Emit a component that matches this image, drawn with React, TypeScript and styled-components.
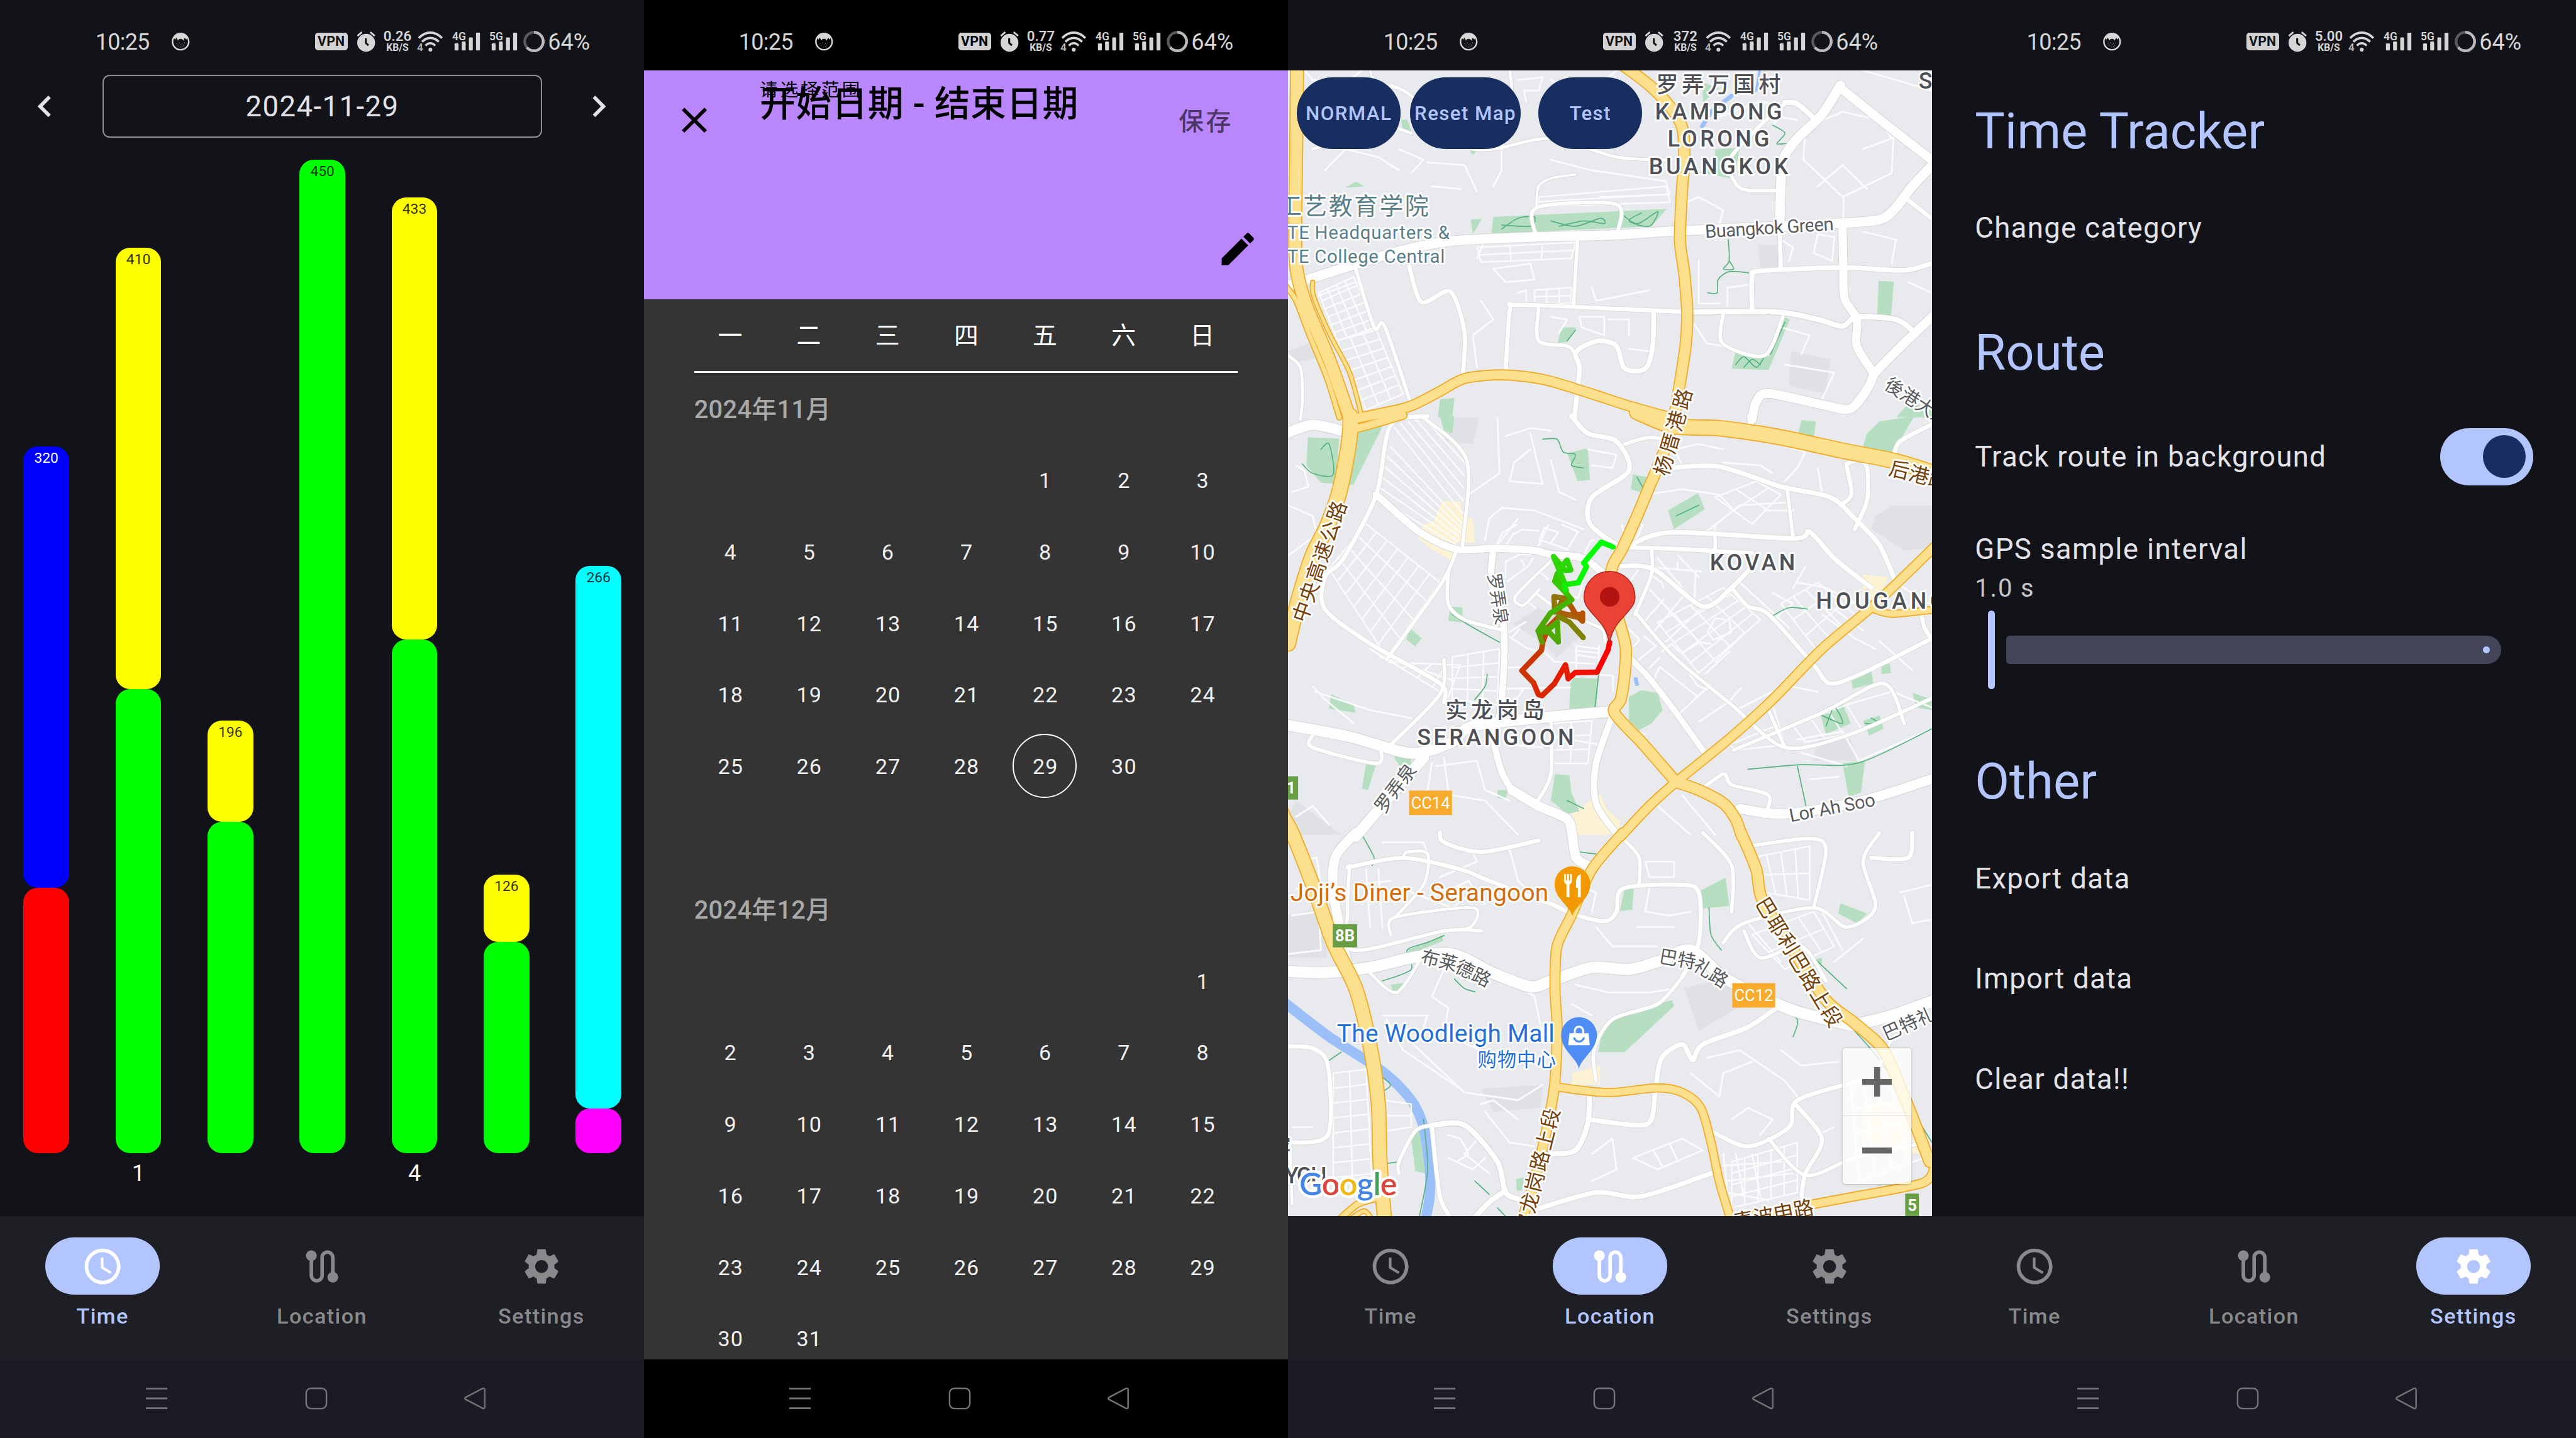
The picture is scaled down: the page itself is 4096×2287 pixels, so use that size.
import React from "react";
import styled, { createGlobalStyle, css } from "styled-components";
import {
  MdSchedule,
  MdRoute,
  MdSettings,
  MdClose,
  MdEdit,
  MdKeyboardArrowLeft,
  MdKeyboardArrowRight,
} from "react-icons/md";

/* 1rem is ten units of the 4320-unit wide board of four phones. */
const GlobalStyle = createGlobalStyle`
  html { font-size: calc(100vw / 432); }
  *, *::before, *::after { box-sizing: border-box; }
  body {
    margin: 0;
    background: #121318;
    font-family: Roboto, "Noto Sans CJK SC", sans-serif;
    overflow: hidden;
  }
  svg { display: block; flex: none; }
`;

const palette = {
  background: "#121318",
  nav: "#1d1f24",
  system: "#1b1b23",
  primary: "#b3c5ff",
  onPrimary: "#182e60",
  text: "#e3e2e8",
  muted: "#89898b",
};

const Board = styled.main`
  display: grid;
  grid-template-columns: repeat(4, 108rem);
  height: 100vh;
  overflow: hidden;
`;

const Phone = styled.section<{ $bg?: string }>`
  display: flex;
  flex-direction: column;
  height: 241.22rem;
  min-width: 0;
  overflow: hidden;
  color: ${palette.text};
  background: ${(p) => p.$bg ?? palette.background};
`;

/* ---------- status bar ---------- */

const StatusRow = styled.header<{ $nudge?: boolean }>`
  display: flex;
  align-items: center;
  flex: none;
  height: 11.8rem;
  padding: 2.2rem 0 0 ${(p) => (p.$nudge ? "15.9rem" : "16rem")};
  color: #d6d6d6;
  white-space: nowrap;
  svg {
    overflow: visible;
  }
`;

const Clock = styled.span`
  width: 12.8rem;
  padding-top: 0.2rem;
  font-size: 3.8rem;
  line-height: 1.2;
  letter-spacing: -0.08rem;
`;

const Slot = styled.span<{ $w: number; $gap?: number }>`
  flex: none;
  width: ${(p) => p.$w}rem;
  margin-left: ${(p) => p.$gap ?? 0}rem;
  svg {
    width: 100%;
    height: auto;
  }
`;

const VpnBadge = styled.span<{ $ink: string }>`
  display: flex;
  align-items: center;
  justify-content: center;
  width: 5.5rem;
  height: 3rem;
  margin: 0 0 0.1rem 21rem;
  border-radius: 0.5rem;
  background: #d2d2d2;
  color: ${(p) => p.$ink};
  font-size: 2.25rem;
  font-weight: 700;
  letter-spacing: 0.02rem;
`;

const Speed = styled.span`
  display: flex;
  flex-direction: column;
  align-items: center;
  width: 4.9rem;
  margin-left: 1.2rem;
  font-weight: 600;
  font-size: 2.35rem;
  line-height: 2.1rem;
  small {
    font-size: 1.65rem;
    line-height: 1.7rem;
    font-weight: 700;
  }
`;

const Battery = styled.span`
  margin-left: 0.5rem;
  padding-top: 0.2rem;
  font-size: 3.8rem;
  line-height: 1.2;
  letter-spacing: 0;
`;

const CatFace = ({ ink }: { ink: string }) => (
  <svg viewBox="0 0 30 30">
    <circle cx="15" cy="15" r="13.6" fill={ink} stroke="#d6d6d6" strokeWidth="2.6" />
    <path d="M3.6 8A13 13 0 0 1 26.4 8L24.5 11.5 22 8.5Q20 12 19.5 13.5L18 11Q15 9.8 12 11L10.5 13.5Q9.6 11 8 8.5L5.5 11.5Z" fill="#d6d6d6" />
    <path d="M8 18h1M12 17h1M17 18h1M21 17h1M10 21h1M15 20h1M19 21h1M14 24h1M17 23.5h1" stroke="#d6d6d6" strokeWidth="1" />
  </svg>
);

const Alarm = ({ ink }: { ink: string }) => (
  <svg viewBox="0 0 32 36">
    <circle cx="16" cy="20" r="15" fill="#d6d6d6" />
    <path d="M1.500 8.500L9 2.200M30.500 8.500L23 2.200" stroke="#d6d6d6" strokeWidth="3" fill="none" />
    <path d="M15.500 12.500V20.500L20 24.500" stroke={ink} strokeWidth="3.200" fill="none" strokeLinejoin="round" />
  </svg>
);

const Wifi = () => (
  <svg viewBox="0 0 43 34">
    <g fill="none" stroke="#d6d6d6" strokeWidth="3.8">
      <path d="M3 11Q12 2 22.500 2T42 11" />
      <path d="M8.500 17.500Q14.500 11 22.500 11T36.500 17.500" />
      <path d="M14.500 24Q17.500 19.800 22.500 19.800T30.500 24" />
    </g>
    <circle cx="22.5" cy="30.5" r="3.2" fill="#d6d6d6" />
    <text x="0" y="33" fontSize="18" fontWeight="600" fill="#b5b5b5">4</text>
  </svg>
);

const Signal = ({ label }: { label: string }) => (
  <svg viewBox="0 0 48 34">
    <g fill="#d6d6d6">
      <rect x="4" y="20" width="6.6" height="12" rx="1.5" />
      <rect x="16" y="17" width="6.6" height="15" rx="1.5" />
      <rect x="28" y="10" width="6.6" height="22" rx="1.5" />
      <rect x="40" y="2" width="6.6" height="30" rx="1.5" />
      <text x="0" y="15.2" fontSize="20" fontWeight="600" textLength="23" lengthAdjust="spacingAndGlyphs">{label}</text>
    </g>
  </svg>
);

const BatteryRing = () => (
  <svg viewBox="0 0 36 36">
    <circle cx="18" cy="18" r="15.5" fill="none" stroke="#5a5a5c" strokeWidth="4.6" />
    <circle cx="18" cy="18" r="15.5" fill="none" stroke="#b9b9b9" strokeWidth="4.6" pathLength="100" strokeDasharray="64 36" transform="rotate(-90 18 18)" />
  </svg>
);

function StatusBar({ speed, ink = palette.background, nudge }: { speed: string; ink?: string; nudge?: boolean }) {
  return (
    <StatusRow $nudge={nudge}>
      <Clock>10:25</Clock>
      <Slot $w={3}><CatFace ink={ink} /></Slot>
      <VpnBadge $ink={ink}>VPN</VpnBadge>
      <Slot $w={3.2} $gap={1.5}><Alarm ink={ink} /></Slot>
      <Speed>{speed}<small>KB/S</small></Speed>
      <Slot $w={4.3} $gap={0.8}><Wifi /></Slot>
      <Slot $w={4.8} $gap={1.6}><Signal label="4G" /></Slot>
      <Slot $w={4.8} $gap={1.5}><Signal label="5G" /></Slot>
      <Slot $w={3.6} $gap={0.9}><BatteryRing /></Slot>
      <Battery>64%</Battery>
    </StatusRow>
  );
}

/* ---------- bottom navigation and system keys ---------- */

const NavRow = styled.nav`
  display: flex;
  gap: 2.4rem;
  flex: none;
  height: 24rem;
  padding-top: 3.6rem;
  background: ${palette.nav};
`;

const NavItem = styled.div<{ $active: boolean }>`
  flex: 1;
  display: flex;
  flex-direction: column;
  align-items: center;
  gap: 1.2rem;
  font-size: 3.6rem;
  line-height: 4.8rem;
  font-weight: 500;
  letter-spacing: 0.15rem;
  color: ${(p) => (p.$active ? palette.primary : palette.muted)};
`;

const Pill = styled.span<{ $active: boolean }>`
  display: flex;
  align-items: center;
  justify-content: center;
  width: 19.2rem;
  height: 9.6rem;
  border-radius: 4.8rem;
  svg {
    width: 7.2rem;
    height: 7.2rem;
  }
  ${(p) => p.$active && css`
    background: ${palette.primary};
    color: #fff;
  `}
`;

const tabs = [
  { name: "Time", Icon: MdSchedule },
  { name: "Location", Icon: MdRoute },
  { name: "Settings", Icon: MdSettings },
];

const BottomNav = ({ active }: { active: string }) => (
  <NavRow>
    {tabs.map(({ name, Icon }) => (
      <NavItem key={name} $active={name === active}>
        <Pill $active={name === active}><Icon /></Pill>
        {name}
      </NavItem>
    ))}
  </NavRow>
);

const KeysRow = styled.footer<{ $bg: string; $nudge?: boolean }>`
  display: flex;
  align-items: center;
  flex: none;
  gap: 23rem;
  height: 13.22rem;
  padding-left: ${(p) => (p.$nudge ? "24.3rem" : "24.4rem")};
  background: ${(p) => p.$bg};
  svg {
    width: 3.8rem;
    height: 3.8rem;
    fill: none;
    stroke: #737379;
  }
  svg:last-child {
    margin-left: -0.2rem;
  }
`;

const SystemKeys = ({ bg = palette.system, nudge }: { bg?: string; nudge?: boolean }) => (
  <KeysRow $bg={bg} $nudge={nudge}>
    <svg viewBox="0 0 38 38" strokeWidth="3"><path d="M1 2.500h36M1 19h36M1 35.500h36" /></svg>
    <svg viewBox="0 0 38 38" strokeWidth="2.6"><rect x="2" y="2" width="34" height="34" rx="8" /></svg>
    <svg viewBox="0 0 38 38" strokeWidth="2.6"><path d="M2.500 17.300L31 2.200Q34.500 1.200 34.500 4.500V33.500Q34.500 36.800 31 35.600L2.500 20.700Q0 19 2.500 17.300Z" /></svg>
  </KeysRow>
);

/* ---------- time screen ---------- */

const Body = styled.div`
  flex: 1;
  min-height: 0;
  display: flex;
  flex-direction: column;
`;

const DateRow = styled.div`
  display: flex;
  align-items: center;
  justify-content: space-between;
  flex: none;
  height: 10.5rem;
  margin: 0.8rem 4rem 0 3.9rem;
  svg {
    width: 7.2rem;
    height: 7.2rem;
  }
`;

const DateField = styled.div`
  display: flex;
  align-items: center;
  justify-content: center;
  width: 73.8rem;
  height: 100%;
  margin-left: 0.2rem;
  border: 0.3rem solid #8d8e93;
  border-radius: 1.2rem;
  font-size: 4.8rem;
  letter-spacing: 0.15rem;
`;

const Chart = styled.div`
  display: flex;
  justify-content: space-between;
  flex: none;
  margin: 3.65rem 3.8rem 0 3.95rem;
`;

const Column = styled.div`
  display: flex;
  flex-direction: column;
  justify-content: flex-end;
  align-items: center;
  width: 7.65rem;
  height: 173.7rem;
`;

const Segment = styled.div<{ $color: string; $ink?: string }>`
  flex: none;
  width: 100%;
  border-radius: 2.4rem;
  background: ${(p) => p.$color};
  color: ${(p) => p.$ink ?? "rgba(0, 0, 0, 0.82)"};
  font-size: 2.4rem;
  line-height: 4.1rem;
  text-align: center;
`;

const Tick = styled.div`
  flex: none;
  height: 7.05rem;
  padding-top: 1.4rem;
  font-size: 3.8rem;
  line-height: 4.2rem;
  color: #fff;
`;

const days: { tick?: string; ink?: string; parts: [string, number][] }[] = [
  { ink: "#fff", parts: [["#0000ff", 200], ["#ff0000", 120]] },
  { tick: "1", parts: [["#ffff00", 200], ["#00ff00", 210]] },
  { parts: [["#ffff00", 46], ["#00ff00", 150]] },
  { parts: [["#00ff00", 450]] },
  { tick: "4", parts: [["#ffff00", 200.4], ["#00ff00", 232.6]] },
  { parts: [["#ffff00", 30.5], ["#00ff00", 95.5]] },
  { parts: [["#00ffff", 246], ["#ff00ff", 20]] },
];

const TimeScreen = () => (
  <Phone>
    <StatusBar speed="0.26" />
    <Body>
      <DateRow>
        <MdKeyboardArrowLeft />
        <DateField>2024-11-29</DateField>
        <MdKeyboardArrowRight />
      </DateRow>
      <Chart>
        {days.map((day, i) => (
          <Column key={i}>
            {day.parts.map(([color, value], j) => (
              <Segment key={j} $color={color} $ink={day.ink} style={{ height: `${value * 0.37024}rem` }}>
                {j === 0 && Math.round(day.parts.reduce((sum, p) => sum + p[1], 0))}
              </Segment>
            ))}
            <Tick>{day.tick}</Tick>
          </Column>
        ))}
      </Chart>
    </Body>
    <BottomNav active="Time" />
    <SystemKeys />
  </Phone>
);

/* ---------- date range picker ---------- */

const PickerHeader = styled.div`
  display: flex;
  flex-direction: column;
  justify-content: space-between;
  flex: none;
  height: 38.4rem;
  padding: 0 4.8rem 4.8rem;
  background: #b986fb;
  color: #000;
  > svg {
    align-self: flex-end;
    width: 7.2rem;
    height: 7.2rem;
  }
`;

const PickerTop = styled.div`
  display: flex;
  align-items: flex-start;
  > svg {
    width: 7.2rem;
    height: 7.2rem;
    margin-top: 4.8rem;
  }
`;

const PickerTitles = styled.div`
  padding: 1.95rem 0 0 7.4rem;
  white-space: nowrap;
`;

const Overline = styled.div`
  font-size: 3rem;
  line-height: 3rem;
  letter-spacing: 0.45rem;
`;

const Headline = styled.div`
  margin-top: -2.2rem;
  font-size: 6rem;
  line-height: 6rem;
  font-weight: 500;
  letter-spacing: 0.04rem;
`;

const SaveButton = styled.span`
  margin: 6.5rem 4.4rem 0 auto;
  font-size: 4.2rem;
  line-height: 4.2rem;
  font-weight: 500;
  letter-spacing: 0.37rem;
  color: rgba(0, 0, 0, 0.6);
`;

const Calendar = styled.div`
  flex: 1;
  min-height: 0;
  overflow: hidden;
  padding: 0 7.8rem;
  background: #343434;
  color: #f1f1f1;
`;

const WeekGrid = styled.div`
  display: grid;
  grid-template-columns: repeat(7, 13.2rem);
  grid-auto-rows: 12rem;
`;

const WeekHead = styled(WeekGrid)`
  color: #fff;
  font-size: 4.1rem;
`;

const Divider = styled.div`
  height: 0.3rem;
  margin: 0 0.6rem;
  background: #fff;
`;

const MonthName = styled.div`
  height: 12rem;
  padding-left: 0.6rem;
  font-size: 4.2rem;
  line-height: 12.5rem;
  font-weight: 500;
  letter-spacing: 0.03rem;
  color: #a9a9a9;
`;

const MonthGrid = styled(WeekGrid)`
  height: 72rem;
`;

const Cell = styled.span<{ $column?: number; $today?: boolean }>`
  display: flex;
  align-items: center;
  justify-content: center;
  letter-spacing: 0.12rem;
  ${(p) => p.$column && css`grid-column-start: ${p.$column};`}
  ${(p) => p.$today && css`
    width: 10.8rem;
    height: 10.8rem;
    margin: 0.6rem 1.2rem;
    border: 0.25rem solid #fff;
    border-radius: 50%;
  `}
`;

const HeadCell = styled(Cell)`
  padding: 0 0 0.5rem 0.2rem;
`;

const DayCell = styled(Cell)`
  padding: 0.2rem 0 0 0.25rem;
  font-size: 3.6rem;
`;

const Month = ({ title, start, count, today }: { title: string; start: number; count: number; today?: number }) => (
  <>
    <MonthName>{title}</MonthName>
    <MonthGrid>
      {Array.from({ length: count }, (_, i) => (
        <DayCell key={i} $column={i === 0 ? start : undefined} $today={today === i + 1}>
          {i + 1}
        </DayCell>
      ))}
    </MonthGrid>
  </>
);

const PickerScreen = () => (
  <Phone $bg="#000">
    <StatusBar speed="0.77" ink="#000" nudge />
    <PickerHeader>
      <PickerTop>
        <MdClose />
        <PickerTitles>
          <Overline>请选择范围</Overline>
          <Headline>开始日期 - 结束日期</Headline>
        </PickerTitles>
        <SaveButton>保存</SaveButton>
      </PickerTop>
      <MdEdit />
    </PickerHeader>
    <Calendar>
      <WeekHead>
        {["一", "二", "三", "四", "五", "六", "日"].map((d) => <HeadCell key={d}>{d}</HeadCell>)}
      </WeekHead>
      <Divider />
      <Month title="2024年11月" start={5} count={30} today={29} />
      <Month title="2024年12月" start={7} count={31} />
    </Calendar>
    <SystemKeys bg="#000" nudge />
  </Phone>
);

/* ---------- map ---------- */

type Sheet = "a" | "b" | "c" | "route";
type Line = [Sheet, number, string];

/* The survey comes as sheets, each with its own scale (x, y) and origin (x, y). */
const sheets: Record<Sheet, [number, number, number, number]> = {
  a: [0.68878, 0.44643, 0, 0],
  b: [0.68878, 0.44643, 0, 700],
  c: [0.68878, 0.6454, 0, 1400],
  route: [0.33333, 0.33333, 340, 880],
};

const parse = (sheet: Sheet, data: string): number[][] => {
  const [sx, sy, ox, oy] = sheets[sheet];
  return data.trim().split(/\s+/).map((pair) => {
    const [x, y] = pair.split(",").map(Number);
    return [x * sx + ox, y * sy + oy];
  });
};

const straight = (sheet: Sheet, data: string) =>
  "M" + parse(sheet, data).map((p) => p.map((v) => v.toFixed(1)).join(" ")).join("L");

const curve = (sheet: Sheet, data: string) => {
  const p = parse(sheet, data);
  let d = `M${p[0][0].toFixed(1)} ${p[0][1].toFixed(1)}`;
  for (let i = 0; i < p.length - 1; i++) {
    const before = p[i - 1] ?? p[i];
    const after = p[i + 2] ?? p[i + 1];
    const c1 = [p[i][0] + (p[i + 1][0] - before[0]) / 7, p[i][1] + (p[i + 1][1] - before[1]) / 7];
    const c2 = [p[i + 1][0] - (after[0] - p[i][0]) / 7, p[i + 1][1] - (after[1] - p[i][1]) / 7];
    d += `C${[...c1, ...c2, ...p[i + 1]].map((v) => v.toFixed(1)).join(" ")}`;
  }
  return d;
};

const highways: Line[] = [
  ["a", 20, "22,250 20,560 18,800 20,1000 45,1150 100,1350 150,1568"],
  ["a", 7, "-5,1075 20,1130 50,1250 95,1420 125,1568"],
  ["a", 5, "60,1060 62,1110 100,1250 150,1400 180,1568"],
  ["b", 24, "152,-5 152,40 145,130 125,280 95,410 60,520 25,690 0,850"],
  ["b", 8, "-8,1470 0,1500 15,1575"],
  ["c", 22, "-8,-40 12,0 60,130 110,280 165,400 200,550 220,700 224,850 235,1000"],
  ["a", 15, "155,1575 290,1530 370,1470 430,1422 520,1408 620,1425 720,1470 830,1525 940,1572"],
  ["b", 12, "145,50 200,28 280,-8"],
  ["b", 24, "850,-20 930,30 1000,38 1060,42 1200,75 1350,125 1480,165 1575,210"],
  ["a", 17, "820,250 880,320 930,400 960,480 965,600 960,700 955,850 955,920 965,1030 972,1170 968,1300 950,1480 940,1575"],
  ["b", 17, "940,-5 915,130 880,260 850,370 815,490 790,560 785,640 805,760 822,860 820,960 810,1060 795,1110 860,1220 900,1290 945,1370"],
  ["b", 17, "945,1370 1000,1400 1060,1450 1090,1510 1105,1575"],
  ["c", 17, "1103,-5 1140,90 1155,170 1230,300 1310,430 1380,490 1450,560 1500,680 1530,760 1562,850"],
  ["c", 13, "1575,860 1545,905 1380,940 1280,960 1080,1000"],
  ["b", 14, "1575,485 1430,700 1300,870 1180,1060 1080,1200 945,1370 880,1460 810,1575"],
  ["b", 10, "1425,720 1470,738 1575,722"],
  ["c", 15, "815,-5 740,90 690,210 655,290 650,400 655,500 650,640 635,740 600,900 570,1000"],
  ["c", 12, "650,655 720,665 790,670 900,658 960,670 1005,710 1030,800 1050,900 1078,1000"],
  ["c", 9, "125,1000 170,960 215,945"],
  ["c", 6, "150,1000 185,978 205,1000"],
];

const majors: Line[] = [
  ["a", 16, "-5,1075 150,1000 280,940 400,905 600,890 800,882 940,868 1200,850 1330,840 1440,825 1480,780 1520,700 1575,610"],
  ["a", 16, "1345,320 1300,430 1240,520 1205,600 1200,700 1197,850"],
  ["a", 15, "1345,330 1450,460 1575,610"],
  ["a", 9, "1210,385 1240,390 1285,450"],
  ["a", 14, "1350,850 1352,1000 1355,1120 1385,1200 1385,1300 1425,1400"],
  ["a", 15, "1575,1180 1500,1290 1430,1400 1415,1450 1370,1535 1300,1520 1170,1478 1140,1510 1130,1575"],
  ["a", 9, "972,1172 1190,1172 1290,1200 1350,1225 1385,1190 1480,1200 1520,1240"],
  ["b", 17, "-5,60 60,28 130,50"],
  ["b", 12, "215,290 320,430 410,495 500,492 600,500 640,515 720,530 785,610"],
  ["b", 11, "500,495 495,620 525,780 525,960 515,1120 500,1200 520,1330 545,1400"],
  ["b", 16, "545,1400 610,1460 680,1510 692,1575"],
  ["c", 16, "692,-5 702,60 740,85"],
  ["b", 18, "-5,1155 150,1200 300,1262 400,1220 450,1160 640,1125 790,1105"],
  ["b", 18, "330,1280 250,1420 165,1575"],
  ["c", 16, "165,-5 115,60 112,160 145,340"],
  ["b", 10, "830,900 880,980 940,1100 1010,1250"],
  ["b", 11, "790,1120 750,1300 750,1450 800,1565"],
  ["b", 16, "1100,1470 1210,1490 1400,1440 1575,1355"],
  ["c", 19, "-5,355 90,358 200,345 300,320 400,310 500,360 590,395 640,380 740,345 830,350 900,330 980,300 1060,370 1150,420 1240,460 1370,495"],
  ["c", 19, "1575,430 1470,470 1395,490"],
  ["c", 9, "735,660 730,750 700,820 640,830"],
  ["c", 9, "350,755 430,755 510,850 530,930 570,950"],
  ["c", 9, "530,925 490,955 450,1000"],
  ["b", 10, "1125,-5 1128,40"],
];

const streets: Line[] = [
  ["a", 7, "970,1172 800,1160 560,1145 540,1165 530,1400"],
  ["a", 6, "705,900 695,1150"],
  ["a", 8, "890,1170 888,1300 870,1385 820,1385 800,1300 760,1280 720,1300 700,1330 710,1380 705,1460 697,1575"],
  ["a", 6, "610,1160 610,1280 680,1300 700,1330"],
  ["a", 6, "165,1010 210,1230 235,1225 300,1520"],
  ["a", 7, "295,1000 325,1135 395,1095 430,1250 425,1420"],
  ["a", 8, "1130,1170 1130,1040 1150,1018 1350,1005 1500,1015 1575,985"],
  ["a", 7, "1197,850 1200,1005"],
  ["a", 6, "605,890 605,780 800,768 800,885"],
  ["a", 5, "-5,1330 30,1380 35,1500 30,1575"],
  ["a", 7, "1500,740 1575,830"],
  ["a", 6, "1060,1175 1058,1290 1160,1335 1205,1190"],
  ["a", 6, "1195,715 1120,715 1090,690 1075,600 1150,470 1210,390"],
  ["a", 5, "60,560 100,540 140,500 230,470 300,500"],
  ["a", 5, "250,320 300,360 420,540 500,560 640,520 800,590 920,600"],
  ["a", 4, "200,264 210,300 260,330"],
  ["a", 5, "540,264 545,380 520,560"],
  ["a", 4, "605,780 610,700 640,670 700,655"],
  ["b", 7, "340,-5 250,30 215,290 135,530 90,600 90,720 200,850 370,1000 380,1070"],
  ["b", 6, "425,480 435,160 325,-5"],
  ["b", 6, "410,500 375,620 240,910"],
  ["b", 8, "690,-5 730,60 800,90 830,200 740,300 735,400 800,480"],
  ["b", 8, "822,490 930,432 1230,455 1270,430 1330,530 1420,640"],
  ["b", 8, "930,190 1050,185 1200,260 1320,300 1380,380 1440,480 1480,620"],
  ["b", 7, "822,488 960,495 1130,510"],
  ["b", 8, "800,560 890,570 1010,710 1080,640 1130,560"],
  ["b", 7, "1080,640 1120,710 1170,740 1280,930 1320,1000 1400,960 1575,825"],
  ["b", 6, "850,740 940,900 1080,1080 1210,1240 1370,1190 1575,1050"],
  ["b", 6, "885,490 885,590 845,740"],
  ["b", 6, "1085,1250 1300,1110 1450,1000 1500,1150"],
  ["b", 6, "1000,1405 1060,1340 1080,1380 1170,1420 1160,1500"],
  ["b", 7, "1360,180 1372,290 1345,330"],
  ["b", 7, "1360,175 1390,160 1410,190 1410,310 1380,420"],
  ["b", 6, "1215,265 1230,455"],
  ["b", 6, "1040,435 1040,500"],
  ["b", 7, "1575,20 1490,90 1475,150"],
  ["b", 6, "60,1195 60,1240 215,1300 225,1240"],
  ["b", 6, "380,910 370,1040 250,1230"],
  ["b", 6, "640,1125 640,1340 600,1460"],
  ["b", 6, "390,580 390,700 430,760 525,800"],
  ["b", 6, "820,100 880,75 940,90"],
  ["b", 7, "1540,720 1550,790 1575,850"],
  ["b", 6, "1170,1100 1210,1240"],
  ["route", 5, "300,185 125,360 165,405 245,325"],
  ["route", 5, "235,350 330,420 460,480 560,525 575,590"],
  ["c", 7, "370,-5 380,20 470,45 610,15"],
  ["c", 7, "145,85 280,60 420,90 490,120 640,180 690,205 770,225 800,200 815,140 950,130 1000,150 1000,280 960,370"],
  ["c", 6, "855,130 855,60 820,15"],
  ["c", 6, "150,80 145,200 160,300 380,250 470,250"],
  ["c", 5, "250,260 260,215 450,190 445,240 380,250"],
  ["c", 5, "280,60 290,45 340,50 330,130 260,215"],
  ["c", 7, "-5,550 60,555 97,600 97,780 -5,800"],
  ["c", 8, "730,740 850,755 885,740 895,660 910,580 960,545 985,585 1010,545 1120,500 1190,450"],
  ["c", 7, "350,755 370,940 400,1000"],
  ["c", 6, "350,755 310,770 270,850 270,880"],
  ["c", 8, "600,975 750,930 860,940 1030,880"],
  ["c", 7, "1030,770 1120,810 1220,760 1240,690 1390,640"],
  ["c", 7, "1235,700 1300,790 1260,880 1250,940"],
  ["c", 6, "1170,790 1260,885 1380,840 1550,800"],
  ["c", 6, "1120,30 1270,10 1310,40 1280,190"],
  ["c", 6, "1060,280 1110,230 1280,190 1360,240 1430,190 1400,70 1440,-5"],
  ["c", 6, "1010,-5 1080,80 1080,200"],
  ["c", 6, "750,640 745,560 790,480 900,440 960,370"],
  ["c", 6, "1110,250 1150,320 1250,290 1310,380"],
  ["c", 7, "1420,60 1510,60 1520,-5"],
  ["c", 5, "200,360 265,410 330,310"],
  ["c", 5, "1470,530 1440,600"],
  ["c", 5, "5,800 10,960"],
];

const lanes: [Sheet, string][] = [
  ["a", "90,640 140,560 220,590 270,640"], ["a", "270,560 330,600 300,650"], ["a", "520,560 520,640 500,700"],
  ["a", "640,600 740,640 920,680 930,730 760,740"], ["a", "350,700 420,710"], ["a", "340,610 430,620 460,720"],
  ["a", "1000,980 1000,1140 1050,1140"], ["a", "1070,1150 1070,1080 1120,1070"], ["a", "1260,470 1255,600 1290,650 1350,740 1470,650 1475,480"],
  ["a", "1290,460 1350,420 1440,450 1470,520 1400,560"], ["a", "1290,700 1350,620 1410,710"], ["a", "1353,740 1352,840"],
  ["a", "970,760 1000,740 1060,790 1050,840"], ["a", "1200,900 1230,930 1220,980"], ["a", "1290,880 1330,890 1325,980 1280,950 1290,880"],
  ["a", "75,1110 165,1060"], ["a", "460,970 480,900 600,905"], ["a", "500,1010 590,990 600,1050 530,1060 500,1010"],
  ["a", "560,1100 580,1090 580,1150"], ["a", "740,1080 750,1130 880,1090"], ["a", "710,1190 770,1190 770,1260 715,1230 710,1190"],
  ["a", "780,1200 830,1200 830,1260"], ["a", "640,1190 680,1200 660,1250"], ["a", "470,1130 500,1200 450,1260 460,1380"],
  ["a", "830,1310 880,1320"], ["a", "990,1220 1020,1290 1060,1300"], ["a", "1200,1230 1270,1260 1250,1330"],
  ["a", "1210,1370 1330,1400 1300,1500"], ["a", "1400,870 1480,900 1470,990"], ["a", "1510,1060 1568,1100"],
  ["a", "1180,470 1200,440 1240,450"], ["a", "40,264 60,300 150,300 180,264"], ["a", "560,300 620,290 610,340 575,340 580,380"],
  ["a", "660,400 720,380 780,450 860,440"], ["a", "640,300 700,350 760,320 800,264"],
  ["a", "1200,400 1150,380 1050,440"], ["a", "1400,264 1568,340"],
  ["b", "10,280 50,260 40,200 20,180"], ["b", "0,330 60,370 70,440 0,520"], ["b", "510,0 515,210 440,290"],
  ["b", "530,70 590,40 640,50"], ["b", "590,60 620,250 540,240 550,170 590,120"], ["b", "640,160 660,280 700,310"],
  ["b", "730,120 800,140 790,190 740,180"], ["b", "480,460 490,380 520,340 600,350 720,420"], ["b", "510,480 560,380"],
  ["b", "870,290 960,270 1050,290 1080,340"], ["b", "960,180 940,120 1000,100 1060,120"], ["b", "1060,170 1150,180 1180,210"],
  ["b", "1190,100 1260,130 1240,190 1210,240"], ["b", "1290,190 1300,280"], ["b", "1010,440 1100,330 1210,320"],
  ["b", "1160,350 1230,350"], ["b", "900,530 960,640"], ["b", "950,520 1000,600"],
  ["b", "1230,640 1260,560"], ["b", "1180,660 1230,700 1190,750"], ["b", "1300,740 1380,830 1430,870"],
  ["b", "1330,720 1400,800"], ["b", "1440,840 1520,950"],
  ["b", "1090,1100 1180,1030"], ["b", "1220,790 1100,620"],
  ["b", "1380,700 1310,640 1240,620"], ["b", "1480,620 1560,700"], ["b", "1290,1030 1220,1010"], ["b", "1360,1080 1470,1030 1568,1090"],
  ["b", "1240,1210 1350,1180 1390,1290 1568,1170"], ["b", "1250,1260 1360,1310"], ["b", "1270,1360 1340,1350"], ["b", "60,1010 90,1060 160,1150"],
  ["b", "65,1030 200,1100 300,1130"], ["b", "350,1300 340,1400 300,1430"], ["b", "380,1280 390,1400"], ["b", "360,1310 460,1290 480,1400 540,1440"],
  ["b", "400,1420 480,1440 560,1568"], ["b", "650,1200 760,1230"], ["b", "540,1230 620,1240"],
  ["b", "20,1500 60,1460 100,1530"], ["b", "830,1180 870,1190"], ["b", "900,1460 980,1568"], ["b", "960,1420 1040,1568"],
  ["route", "25,105 60,40 130,0"], ["route", "75,110 110,50 160,25 240,30"], ["route", "230,130 290,0"], ["route", "245,75 385,125 440,35 360,0"],
  ["route", "245,75 270,15 340,40 300,95"], ["route", "250,85 230,120 330,150"], ["route", "75,265 75,185 145,150 205,150"],
  ["route", "85,285 185,210 215,165"], ["route", "155,180 170,205"], ["route", "245,235 290,275"], ["route", "185,385 225,420"],
  ["route", "470,150 500,85 520,75"], ["route", "460,300 440,370 385,345"], ["route", "95,540 175,490"], ["route", "95,565 180,620 250,640"],
  ["route", "110,565 145,525"], ["route", "260,630 320,690 520,700"], ["route", "430,610 430,740"], ["route", "435,610 540,625"],
  ["route", "435,635 540,645"], ["route", "435,655 530,670"], ["route", "545,610 540,745"], ["route", "550,755 615,760 615,840"],
  ["route", "80,825 400,820"], ["route", "85,670 80,720 200,715"], ["route", "135,870 165,825"], ["route", "660,0 670,40"],
  ["route", "725,90 765,0"], ["route", "1130,0 1125,40"], ["route", "640,205 810,215 1060,235"], ["route", "940,190 940,225"],
  ["route", "690,300 740,230"], ["route", "785,310 1050,590"], ["route", "800,250 860,290 870,320"], ["route", "1030,235 1025,385"],
  ["route", "950,290 950,320"], ["route", "770,490 870,375"], ["route", "820,540 975,350"], ["route", "880,590 1060,420"],
  ["route", "960,650 1050,590 1110,600"], ["route", "900,440 980,520"], ["route", "1090,540 1130,470 1200,480 1210,540 1120,580 1090,540"],
  ["route", "745,680 830,610 770,560"], ["route", "690,520 750,580 720,610"], ["route", "860,640 910,600 950,640"], ["route", "800,720 850,670"],
  ["route", "850,715 1040,865"], ["route", "820,780 850,715"], ["route", "945,955 1105,805"], ["route", "1050,990 1200,890 1260,820"],
  ["route", "1000,750 1040,810 1090,830"], ["route", "1080,750 1200,640"], ["route", "1130,690 1260,560"],
  ["c", "230,20 330,20 340,50"], ["c", "190,90 200,240"], ["c", "220,90 230,240"], ["c", "160,130 250,120"], ["c", "370,110 460,70 450,45"],
  ["c", "300,150 400,190 450,150"], ["c", "340,170 440,120 480,180"], ["c", "540,40 560,120 600,160"], ["c", "700,130 750,150 740,200"],
  ["c", "870,70 940,70 940,110 880,110 870,70"], ["c", "880,140 870,200 930,210 980,200"], ["c", "850,240 940,240"], ["c", "750,240 790,290 900,290"],
  ["c", "20,70 70,60 80,130 20,140"], ["c", "10,210 75,200 80,300 0,310"], ["c", "380,350 350,420 390,450 380,520 470,560"],
  ["c", "230,470 340,470 330,500"], ["c", "240,480 280,560 420,660"], ["c", "300,540 430,670 560,690 620,650"], ["c", "470,700 500,690 560,740"],
  ["c", "480,720 540,800 600,810"], ["c", "540,380 600,420 620,520"], ["c", "700,390 780,410 880,410 940,400"], ["c", "690,440 740,470"],
  ["c", "1020,580 1100,560 1210,640 1240,680"], ["c", "980,620 1050,680 1060,620 1130,590"], ["c", "1080,740 1120,710 1180,740 1150,780"],
  ["c", "840,840 960,790 1010,820 900,870 840,840"], ["c", "890,820 910,860"], ["c", "930,805 950,850"], ["c", "1060,830 1070,930 1170,950"],
  ["c", "1090,830 1110,940"], ["c", "1130,830 1150,940"], ["c", "1060,860 1200,850"], ["c", "1065,900 1230,880"],
  ["c", "740,830 790,790 800,870 740,900"], ["c", "1490,150 1568,130"], ["c", "1500,160 1520,230 1568,220"], ["c", "1290,780 1330,760"],
  ["c", "390,780 420,790 440,830 410,850"], ["c", "470,780 430,830 490,880"], ["c", "390,840 450,870 480,840"], ["c", "60,760 10,760"],
  ["c", "1200,560 1250,600 1340,590"], ["c", "1120,230 1200,330"], ["c", "1180,210 1250,300"], ["c", "1300,200 1350,300"], ["c", "1330,330 1400,270"],
];

/* Estate grids: four corners, then how many lanes run each way. */
type Estate = [Sheet, number[], number, number];

const estates: Estate[] = [
  ["a", [75, 1100, 160, 1040, 215, 1230, 120, 1280], 4, 6],
  ["a", [120, 1280, 215, 1240, 280, 1480, 190, 1540], 3, 7],
  ["a", [610, 740, 920, 700, 930, 760, 610, 775], 1, 2],
  ["a", [460, 930, 700, 910, 690, 970, 470, 985], 3, 2],
  ["a", [600, 1090, 690, 1080, 690, 1140, 600, 1140], 3, 2],
  ["b", [255, 30, 330, 0, 430, 170, 425, 360], 4, 0],
  ["b", [215, 300, 250, 110, 425, 400, 410, 480], 5, 0],
  ["b", [100, 570, 190, 400, 370, 620, 240, 900], 4, 7],
  ["b", [200, 870, 245, 920, 420, 930, 390, 1050], 2, 5],
  ["b", [400, 900, 515, 870, 510, 1080, 400, 1060], 3, 4],
  ["b", [900, 770, 1060, 640, 1150, 760, 1000, 960], 4, 5],
  ["b", [1200, 700, 1290, 620, 1380, 740, 1290, 880], 3, 3],
  ["b", [1060, 1210, 1180, 1080, 1210, 1230, 1090, 1250], 1, 2],
  ["b", [1230, 1160, 1360, 1080, 1400, 1180, 1260, 1220], 3, 1],
  ["b", [1040, 300, 1140, 240, 1200, 290, 1130, 400], 2, 2],
  ["b", [640, 1150, 740, 1140, 730, 1300, 645, 1300], 2, 3],
  ["c", [110, 620, 190, 610, 205, 920, 110, 930], 2, 8],
  ["c", [235, 690, 300, 700, 300, 760, 240, 770], 1, 2],
  ["c", [1130, 260, 1280, 200, 1330, 290, 1210, 350], 4, 2],
  ["c", [1130, 60, 1270, 30, 1270, 170, 1160, 150], 4, 2],
  ["c", [1080, 850, 1240, 800, 1240, 930, 1080, 970], 5, 4],
  ["c", [1370, 650, 1500, 640, 1550, 840, 1390, 900], 4, 4],
];

const estatePath = ([sheet, quad, across, down]: Estate) => {
  const between = (from: number, to: number, t: number) =>
    [0, 1].map((axis) => quad[from * 2 + axis] * (1 - t) + quad[to * 2 + axis] * t).join(",");
  const runs: string[] = [];
  for (let k = 0; across > 0 && k <= across; k++) {
    runs.push(straight(sheet, `${between(0, 1, k / across)} ${between(3, 2, k / across)}`));
  }
  for (let k = 0; down > 0 && k <= down; k++) {
    runs.push(straight(sheet, `${between(0, 3, k / down)} ${between(1, 2, k / down)}`));
  }
  return runs.join("");
};

const parks: [Sheet, string][] = [
  ["a", "500,815 922,785 885,850 495,878"], ["a", "445,825 472,822 450,880"], ["a", "140,705 165,682 185,700"],
  ["a", "1040,560 1100,555 1085,672 1010,650 1040,610"], ["a", "665,1230 702,1230 680,1285 657,1288"],
  ["a", "1090,1320 1170,1340 1210,1192 1222,1200 1170,1390 1080,1385"], ["a", "1438,1055 1475,1058 1468,1190 1435,1180"],
  ["a", "370,1500 405,1495 400,1568 365,1568"], ["a", "1480,1568 1515,1510 1568,1540 1568,1568"], ["a", "275,450 290,450 305,510 280,495"],
  ["a", "445,560 458,560 455,578 445,578"], ["a", "1010,310 1050,330 1010,385"],
  ["b", "48,75 125,80 115,250 80,245 45,180"], ["b", "1410,60 1440,15 1525,-5 1470,140 1420,150 1400,110"],
  ["b", "1250,10 1285,15 1280,85 1240,75"], ["b", "370,-5 405,-5 400,60 380,50"],
  ["b", "680,135 730,115 735,235 705,240"], ["b", "840,215 878,225 868,285 835,270"], ["b", "925,350 998,285 1015,345 940,420"],
  ["b", "395,710 425,715 425,770 390,765"], ["b", "295,790 325,830 310,860 288,835"],
  ["route", "410,770 540,775 530,930 400,932"], ["route", "400,800 420,770 405,932 395,930"],
  ["b", "105,1040 160,1080 165,1110 100,1095"], ["b", "830,1050 860,1025 900,1035 912,1100 885,1150 855,1175 830,1140"],
  ["b", "1370,970 1420,950 1425,1000 1375,1020"], ["b", "1445,930 1465,925 1468,960 1445,965"],
  ["b", "1295,1110 1350,1075 1370,1150 1310,1190"], ["b", "1400,1140 1440,1120 1450,1170 1415,1195"],
  ["b", "1520,1035 1568,1060 1568,1100 1530,1090"], ["b", "1350,1300 1405,1290 1395,1410 1365,1425"],
  ["b", "190,1300 215,1300 195,1400 180,1395"], ["b", "258,1275 300,1270 300,1310 275,1320"], ["b", "650,1340 685,1345 690,1410 710,1480 680,1490 640,1440"],
  ["b", "170,40 230,35 160,250 140,260"], ["b", "510,1400 535,1400 530,1435 510,1430"],
  ["c", "820,138 842,138 838,195 808,198"], ["c", "1005,145 1065,112 1075,185 1008,192"], ["c", "1345,178 1410,205 1385,230 1340,205"],
  ["c", "768,500 800,468 935,430 940,445 865,520 820,565 755,565"], ["c", "300,790 325,755 335,880 310,875"], ["c", "555,895 575,890 570,925 557,925"],
  ["c", "250,390 280,385 275,405 255,405"], ["c", "1280,325 1300,320 1300,335 1280,340"], ["c", "290,300 375,262 378,275 300,310"],
];

const greenPaths: [Sheet, string][] = [
  ["a", "520,860 560,820 600,815 590,850 520,845"], ["a", "640,830 700,850 760,820 770,840 720,830 660,850"],
  ["a", "810,800 850,840 900,795 880,850 830,830 860,800"], ["a", "1072,900 1074,980 1060,1010 1085,1010 1074,980"],
  ["a", "1125,1025 1075,1020 1047,1050 1045,1100 1022,1100"], ["a", "1180,470 1210,500 1190,540 1220,540 1200,580"],
  ["a", "680,1280 700,1240"], ["a", "1090,1370 1110,1340 1140,1380 1160,1340"], ["a", "1110,1380 1130,1350 1150,1370"], ["a", "1175,1330 1210,1210"],
  ["b", "620,82 655,82 670,130 700,140 690,180 720,190"], ["b", "35,175 60,210 110,215 100,100 80,120"],
  ["b", "400,740 440,780 515,845"], ["b", "485,965 480,1010 455,1060"], ["route", "542,760 525,910 515,930"], ["b", "1120,1322 1250,1305 1390,1298 1568,1170"],
  ["b", "1240,1310 1262,1465"], ["b", "1180,745 1220,715 1265,720"], ["b", "850,225 870,280"], ["b", "1300,1120 1350,1150 1330,1090 1310,1160"],
  ["b", "1405,1150 1440,1150 1420,1130"], ["b", "945,370 1000,330"], ["b", "680,1440 720,1470"],
  ["c", "230,380 300,350 290,300 340,280 380,262"], ["c", "405,375 430,400 455,408"], ["c", "1025,190 1030,260 1055,300"], ["c", "1195,450 1240,480 1230,525"],
  ["c", "1380,510 1450,600 1568,800"], ["c", "180,0 210,60 205,80"], ["c", "1280,320 1360,400"], ["c", "230,630 250,650 235,665"], ["c", "330,740 340,870 320,992"],
  ["c", "238,855 270,850"], ["c", "455,900 490,935"], ["c", "510,970 530,992"], ["c", "130,565 95,590"], ["c", "710,45 750,50"],
];

const grounds: [Sheet, string][] = [
  ["b", "400,0 465,0 450,100 380,90"], ["b", "1430,370 1475,330 1568,330 1568,490 1500,500 1420,420"], ["b", "1290,1200 1370,1210 1385,1290 1280,1290"],
  ["a", "1225,1320 1320,1350 1310,1480 1220,1450"], ["a", "1145,920 1195,920 1195,1000 1150,1005"],
  ["route", "110,500 240,420 420,500 440,570 330,670 270,600"],
  ["c", "0,210 90,190 95,320 0,320"], ["c", "965,400 1060,370 1140,420 1000,510"], ["c", "470,660 620,650 615,710 500,720"], ["a", "0,1320 70,1280 90,1340 20,1360"],
  ["b", "20,1440 130,1568 20,1568 0,1500"],
];

const sands: [Sheet, string][] = [
  ["b", "375,315 420,318 425,370 450,380 455,470 410,470 400,540 345,490 315,450 330,405 355,390"],
  ["b", "690,1490 760,1415 775,1470 810,1520 800,1568 700,1568"], ["b", "1400,590 1460,600 1440,700 1400,680"],
  ["c", "692,620 760,600 760,650 692,650"], ["c", "1400,700 1520,690 1540,830 1400,800"],
];

/* The walked route, oldest part first: red turns to green along the way. */
const track: [string, string][] = [
  ["#ff0200", "598,592 590,630 535,742"],
  ["#f21000", "535,742 425,744 390,775"],
  ["#e41c00", "390,775 376,705 320,800"],
  ["#d92800", "320,800 258,860 240,855 215,795"],
  ["#cb3500", "215,795 157,735 255,632"],
  ["#bf4206", "255,632 262,590 290,515"],
  ["#bb4a08", "290,515 350,455 460,452"],
  ["#b45200", "462,445 462,485 430,455 400,405"],
  ["#a86008", "400,405 360,375 340,440 430,465"],
  ["#8f7408", "375,370 318,362 322,440 350,400"],
  ["#7f8204", "340,462 395,490 465,568"],
  ["#5f9a04", "258,592 240,535 265,510"],
  ["#4eaa02", "265,510 340,590 335,490 275,540 238,535 300,445"],
  ["#44b402", "300,445 408,378 380,345"],
  ["#35c800", "380,345 322,285 335,245 380,330"],
  ["#2cd600", "370,290 316,160 375,230 403,228 384,178 345,225 375,310"],
  ["#14ec00", "375,325 370,302 440,292"],
  ["#08f800", "440,292 482,210 468,192"],
  ["#00ff00", "468,192 556,88 615,112"],
];

const MapFrame = styled.div`
  position: relative;
  flex: 1;
  min-height: 0;
  overflow: hidden;
  background: #e8eaed;
`;

const MapSvg = styled.svg`
  width: 100%;
  height: 192.2rem;
  .line { fill: none; stroke-linecap: round; stroke-linejoin: round; }
  text { paint-order: stroke; stroke: #fff; stroke-width: 6px; stroke-linejoin: round; }
  .place { fill: #4e5056; font-size: 38px; font-weight: 500; text-anchor: middle; }
  .campus { fill: #59808a; font-size: 31px; }
  .street { fill: #585b60; font-size: 31px; }
  .highway { fill: #74420c; font-size: 34px; stroke: #fdf1cf; }
  .badge { fill: #fff; stroke: none; font-size: 27px; text-anchor: middle; }
  .google { font-family: Lato, Roboto, sans-serif; font-size: 53px; font-weight: 600; stroke-width: 9px; }
`;

const drawLines = (lines: Line[], color: string, extra = 0) =>
  lines.map(([sheet, w, data], i) => (
    <path key={color + i} className="line" d={curve(sheet, data)} stroke={color} strokeWidth={w + extra} />
  ));

const CityMap = () => (
  <MapSvg viewBox="0 118 1080 1922" preserveAspectRatio="none">
    <rect y="118" width="1080" height="1922" fill="#e8eaed" />
    {grounds.map(([s, d], i) => <path key={i} d={straight(s, d) + "Z"} fill="#dfe1e5" />)}
    {sands.map(([s, d], i) => <path key={i} d={straight(s, d) + "Z"} fill="#fdf3d4" />)}
    {parks.map(([s, d], i) => <path key={i} d={straight(s, d) + "Z"} fill="#b5dfc0" />)}
    <path className="line" d={curve("c", "-10,435 100,525 230,615 300,690 330,760 345,870 345,940 335,1000")} stroke="#9bbff8" strokeWidth="17" />
    <path className="line" d={straight("a", "1008,475 1030,420 1080,360")} stroke="#9bbff8" strokeWidth="7" />
    <path className="line" d={straight("a", "1148,266 1140,340")} stroke="#9bbff8" strokeWidth="4" />
    <path d={straight("route", "718,770 737,767 747,808 728,812") + "Z"} fill="#9bbff8" />
    {estates.map((e, i) => <path key={i} className="line" d={estatePath(e)} stroke="#fafbfc" strokeWidth="2.6" />)}
    {lanes.map(([s, d], i) => <path key={i} className="line" d={straight(s, d)} stroke="#fafbfc" strokeWidth="3" />)}
    {greenPaths.map(([s, d], i) => <path key={i} className="line" d={curve(s, d)} stroke="#57b180" strokeWidth="1.8" />)}
    {drawLines(streets, "#d3d6da", 1.6)}
    {drawLines(majors, "#d0d3d8", 2)}
    {drawLines(streets, "#ffffff")}
    {drawLines(majors, "#fefefe")}
    {drawLines(highways, "#f0a922", 3.6)}
    {drawLines(highways, "#fde08e")}

    {track.map(([color, d], i) => <path key={i} className="line" d={straight("route", d)} stroke={color} strokeWidth="9" />)}

    <g className="place">
      <text x="725" y="155" fontSize="37" letterSpacing="6">罗弄万国村</text>
      <text x="722" y="200" textLength="213">KAMPONG</text>
      <text x="722" y="246" textLength="171">LORONG</text>
      <text x="722" y="292" textLength="234">BUANGKOK</text>
      <text x="1069" y="149">S</text>
      <text x="779" y="957" textLength="143">KOVAN</text>
      <text x="994" y="1021" textLength="217">HOUGANG</text>
      <text x="350" y="1204" fontSize="37" letterSpacing="6">实龙岗岛</text>
      <text x="348" y="1250" textLength="263">SERANGOON</text>
      <text x="-14" y="1938">窑</text>
      <text x="10" y="1985" textLength="110">PAYOH</text>
    </g>
    <g className="campus">
      <text x="-17" y="360" fontSize="40" textLength="253">工艺教育学院</text>
      <text x="-10" y="401" textLength="281">ITE Headquarters &amp;</text>
      <text x="-10" y="441" textLength="273">ITE College Central</text>
    </g>
    <g className="street">
      <text transform="translate(700 399) rotate(-3.5)" textLength="216">Buangkok Green</text>
      <text transform="translate(998 650) rotate(33)">後港大道</text>
      <text transform="translate(335 963) rotate(81)" fontSize="29">罗弄泉</text>
      <text transform="translate(161 1366) rotate(-53)">罗弄泉</text>
      <text transform="translate(843 1379) rotate(-11)" textLength="146">Lor Ah Soo</text>
      <text transform="translate(221 1614) rotate(14)">布莱</text>
      <text transform="translate(278 1629) rotate(26)">德路</text>
      <text transform="translate(621 1614) rotate(10)">巴特</text>
      <text transform="translate(677 1625) rotate(32)">礼路</text>
      <text transform="translate(1003 1746) rotate(-24)">巴特礼路</text>
    </g>
    <g className="highway">
      <text transform="translate(637 800) rotate(-74)" textLength="150">杨厝港路</text>
      <text transform="translate(1006 796) rotate(14)">后港路</text>
      <text transform="translate(30 1046) rotate(-71)" textLength="212">中央高速公路</text>
      <text transform="translate(783 1514) rotate(59)" textLength="247">巴耶利巴路上段</text>
      <text transform="translate(404 2072) rotate(-76)" textLength="216">实龙岗路上段</text>
      <text transform="translate(750 2062) rotate(-11)">麦波申路</text>
    </g>

    <rect x="203" y="1326" width="72" height="41" fill="#f9ab2d" />
    <text className="badge" x="239" y="1356">CC14</text>
    <rect x="745" y="1649" width="72" height="41" fill="#f9ab2d" />
    <text className="badge" x="781" y="1679">CC12</text>
    <rect x="-6" y="1302" width="23" height="39" fill="#689f44" />
    <text className="badge" x="5" y="1331" fontWeight="700">1</text>
    <rect x="75" y="1550" width="41" height="39" fill="#689f44" />
    <text className="badge" x="95.5" y="1579" fontWeight="700">8B</text>
    <rect x="1035" y="2002" width="23" height="40" fill="#689f44" />
    <text className="badge" x="1047" y="2031" fontWeight="700">5</text>

    <text x="4" y="1511" fontSize="41" fill="#d56d0b" textLength="433">Joji’s Diner - Serangoon</text>
    <path d="M477 1537C474 1520 447 1508 447 1483A30 30 0 0 1 507 1483C507 1508 480 1520 477 1537Z" fill="#f29900" />
    <path d="M463 1466v11q0 5 4 6v22h5v-22q4-1 4-6v-11h-3v11h-2v-11h-3v11h-2v-11ZM491 1466q-8 3-8 14v9h3v16h5Z" fill="#fff" />
    <text x="82" y="1747" fontSize="41" fill="#1f6fda" textLength="365">The Woodleigh Mall</text>
    <text x="318" y="1789" fontSize="32" fill="#1f6fda" textLength="131">购物中心</text>
    <path d="M488 1793C485 1775 458 1762 458 1736A30 30 0 0 1 518 1736C518 1762 491 1775 488 1793Z" fill="#4f8df5" />
    <path d="M472 1733h32l2 20h-36Z" fill="#fff" />
    <path d="M481 1733v-4a7 7 0 0 1 14 0v4" fill="none" stroke="#fff" strokeWidth="3.4" />
    <path d="M480 1740a8 7 0 0 0 16 0" fill="none" stroke="#4f8df5" strokeWidth="3.4" />

    <path d="M539 1079C534 1054 526 1046 513 1032C503 1020 496.500 1014 496.500 1001A42.500 42.500 0 0 1 582 1001C582 1014 575 1020 565 1032C552 1046 544 1054 539 1079Z" fill="#ea4335" stroke="#b3261c" strokeWidth="1.6" />
    <circle cx="539.5" cy="1001" r="16.500" fill="#b31412" />

    <text className="google" x="19" y="2005" textLength="164">
      <tspan fill="#4285e6">G</tspan><tspan fill="#dc453c">o</tspan><tspan fill="#f1b810">o</tspan><tspan fill="#4285e6">g</tspan><tspan fill="#3aa352">l</tspan><tspan fill="#dc453c">e</tspan>
    </text>
  </MapSvg>
);

const MapActions = styled.div`
  position: absolute;
  top: 1.2rem;
  left: 1.5rem;
  display: flex;
  gap: 1.6rem;
`;

const MapButton = styled.button<{ $w: number; $gap?: number }>`
  width: ${(p) => p.$w}rem;
  height: 12rem;
  margin: 0 0 0 ${(p) => p.$gap ?? 0}rem;
  padding: 0;
  border: 0;
  border-radius: 6rem;
  background: ${palette.onPrimary};
  color: ${palette.primary};
  font: 500 3.3rem Roboto, sans-serif;
  letter-spacing: 0.15rem;
  white-space: nowrap;
`;

const ZoomBox = styled.div`
  position: absolute;
  right: 3.5rem;
  bottom: 5.4rem;
  width: 11.5rem;
  height: 22.8rem;
  border-radius: 0.5rem;
  background: rgba(255, 255, 255, 0.76);
  box-shadow: 0 0.1rem 0.4rem rgba(0, 0, 0, 0.25);
  display: flex;
  flex-direction: column;
`;

const ZoomKey = styled.div`
  flex: 1;
  display: flex;
  align-items: center;
  justify-content: center;
  & + & {
    border-top: 0.2rem solid #e2e2e2;
  }
  svg {
    width: 5rem;
    height: 5rem;
    stroke: #666;
    stroke-width: 10;
  }
`;

const LocationScreen = () => (
  <Phone>
    <StatusBar speed="372" />
    <MapFrame>
      <CityMap />
      <MapActions>
        <MapButton $w={17.4}>NORMAL</MapButton>
        <MapButton $w={18.5}>Reset Map</MapButton>
        <MapButton $w={17.4} $gap={1.4}>Test</MapButton>
      </MapActions>
      <ZoomBox>
        <ZoomKey><svg viewBox="0 0 50 50"><path d="M0 25H50M25 0V50" /></svg></ZoomKey>
        <ZoomKey><svg viewBox="0 0 50 50"><path d="M0 25H50" /></svg></ZoomKey>
      </ZoomBox>
    </MapFrame>
    <BottomNav active="Location" />
    <SystemKeys />
  </Phone>
);

/* ---------- settings screen ---------- */

const SettingsBody = styled(Body)`
  padding: 0 7.2rem 0 7.2rem;
`;

const SectionTitle = styled.h2<{ $above: number; $below: number }>`
  flex: none;
  margin: ${(p) => p.$above}rem 0 ${(p) => p.$below}rem;
  font-size: 8.4rem;
  line-height: 12rem;
  font-weight: 400;
  color: ${palette.primary};
`;

const SettingRow = styled.div`
  display: flex;
  align-items: center;
  justify-content: space-between;
  flex: none;
  height: 16.8rem;
  font-size: 4.8rem;
  letter-spacing: 0.14rem;
`;

const Switch = styled.span`
  display: flex;
  justify-content: flex-end;
  width: 15.6rem;
  height: 9.6rem;
  padding: 1.2rem;
  border-radius: 4.8rem;
  background: ${palette.primary};
  &::after {
    content: "";
    width: 7.2rem;
    border-radius: 50%;
    background: ${palette.onPrimary};
  }
`;

const SliderLabel = styled.div`
  padding-top: 3.6rem;
  font-size: 4.8rem;
  line-height: 7.2rem;
  letter-spacing: 0.15rem;
`;

const SliderValue = styled.div`
  font-size: 4.2rem;
  line-height: 6rem;
  letter-spacing: 0.2rem;
  color: #c5c6cc;
`;

const Slider = styled.div`
  display: flex;
  align-items: center;
  gap: 1.8rem;
  flex: none;
  height: 13.2rem;
  margin: 0.6rem 5.4rem 0 2.2rem;
`;

const SliderHandle = styled.span`
  width: 1.2rem;
  height: 100%;
  border-radius: 0.6rem;
  background: ${palette.primary};
`;

const SliderTrack = styled.span`
  flex: 1;
  display: flex;
  align-items: center;
  justify-content: flex-end;
  height: 4.8rem;
  padding-right: 1.8rem;
  border-radius: 0.6rem 2.4rem 2.4rem 0.6rem;
  background: #434659;
  &::after {
    content: "";
    width: 1.2rem;
    height: 1.2rem;
    border-radius: 50%;
    background: ${palette.primary};
  }
`;

const SettingsScreen = () => (
  <Phone>
    <StatusBar speed="5.00" nudge />
    <SettingsBody>
      <SectionTitle $above={4.2} $below={1.8}>Time Tracker</SectionTitle>
      <SettingRow>Change category</SettingRow>
      <SectionTitle $above={6.6} $below={3}>Route</SectionTitle>
      <SettingRow>Track route in background<Switch /></SettingRow>
      <SliderLabel>GPS sample interval</SliderLabel>
      <SliderValue>1.0 s</SliderValue>
      <Slider><SliderHandle /><SliderTrack /></Slider>
      <SectionTitle $above={9.5} $below={1.9}>Other</SectionTitle>
      <SettingRow>Export data</SettingRow>
      <SettingRow>Import data</SettingRow>
      <SettingRow>Clear data!!</SettingRow>
    </SettingsBody>
    <BottomNav active="Settings" />
    <SystemKeys nudge />
  </Phone>
);

export default function App() {
  return (
    <>
      <GlobalStyle />
      <Board>
        <TimeScreen />
        <PickerScreen />
        <LocationScreen />
        <SettingsScreen />
      </Board>
    </>
  );
}
